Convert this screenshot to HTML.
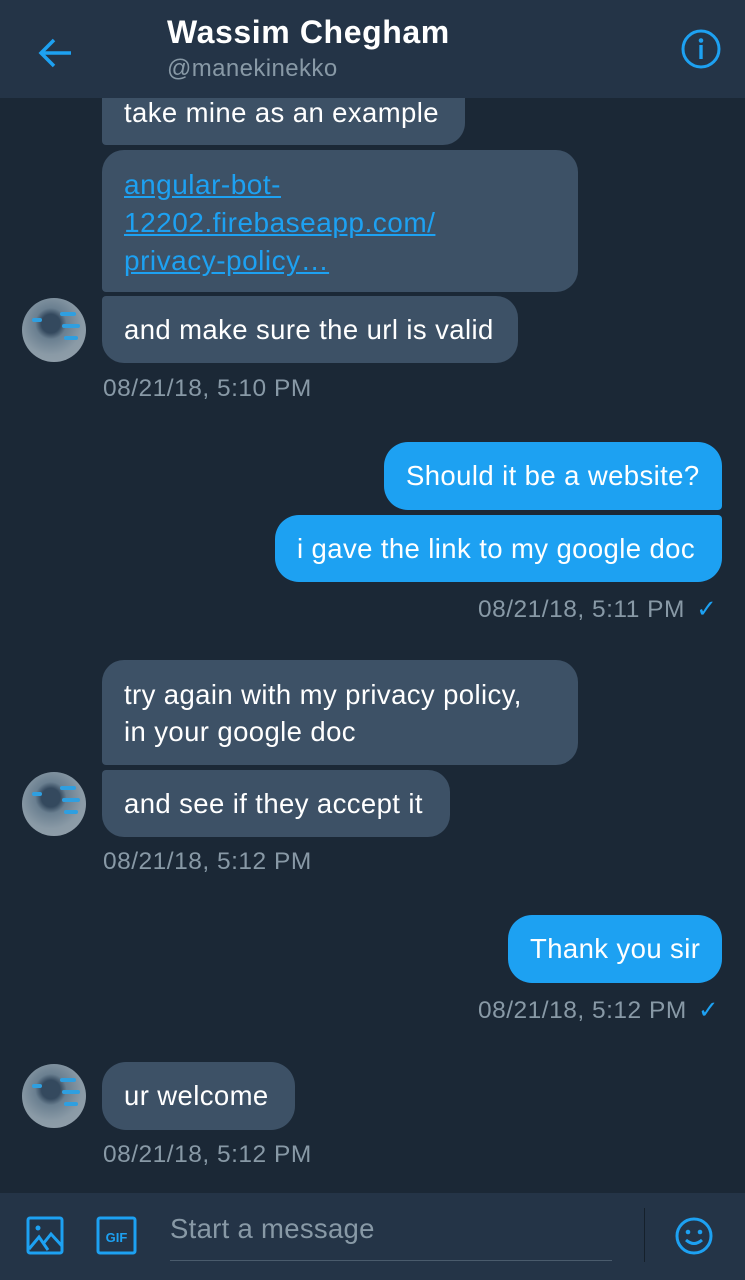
<!DOCTYPE html>
<html><head><meta charset="utf-8"><style>
body{margin:0;width:745px;height:1280px;background:#1b2836;font-family:"Liberation Sans",Roboto,sans-serif;position:relative;overflow:hidden}
.a{position:absolute}
.r{position:absolute;background:#3d5166;color:#fff;font-size:27.5px;letter-spacing:0.4px;border-radius:24px;padding:0 22px;box-sizing:border-box;white-space:nowrap}
.s{position:absolute;background:#1da1f2;color:#fff;font-size:27.5px;letter-spacing:0.4px;border-radius:24px;padding:0 22px;box-sizing:border-box;white-space:nowrap}
.t{position:absolute;color:#8899a6;font-size:24.5px;letter-spacing:0.5px;white-space:nowrap}
.av{position:absolute;width:64px;height:64px;border-radius:50%;background:radial-gradient(circle at 45% 40%,#34495e 0 18%,#6a7f90 30%,#8a9aa6 60%,#96a2ac 100%);overflow:hidden}
.av i{position:absolute;background:#2f9fe0;height:4px;border-radius:2px}
</style></head><body>

<div class="r" style="left:102px;top:80px;width:363px;height:65px;border-radius:0 0 22px 4px"><div class="a" style="left:22px;top:17px">take mine as an example</div></div>
<div class="r" style="left:102px;top:150px;width:476px;height:142px;border-radius:22px 22px 22px 4px;color:#1da1f2;line-height:38px;padding-top:16px;text-decoration:underline;font-size:28px;letter-spacing:0.5px">angular-bot-<br>12202.firebaseapp.com/<br>privacy-policy…</div>
<div class="r" style="left:102px;top:296px;width:416px;height:67px;line-height:67px;border-radius:4px 22px 22px 22px">and make sure the url is valid</div>
<div class="av" style="left:22px;top:298px"><i style="left:38px;top:14px;width:16px"></i><i style="left:40px;top:26px;width:18px"></i><i style="left:42px;top:38px;width:14px"></i><i style="left:10px;top:20px;width:10px"></i></div>
<div class="t" style="left:103px;top:375px">08/21/18, 5:10 PM</div>

<div class="s" style="left:384px;top:442px;width:338px;height:68px;line-height:68px;border-radius:24px 24px 4px 24px">Should it be a website?</div>
<div class="s" style="left:275px;top:515px;width:447px;height:67px;line-height:67px;border-radius:24px 4px 24px 24px">i gave the link to my google doc</div>
<div class="t" style="left:478px;top:594px">08/21/18, 5:11 PM <span style="color:#1da1f2;margin-left:4px">✓</span></div>

<div class="r" style="left:102px;top:660px;width:476px;height:105px;line-height:37px;padding-top:16px;border-radius:22px 22px 22px 4px">try again with my privacy policy,<br>in your google doc</div>
<div class="r" style="left:102px;top:770px;width:348px;height:67px;line-height:67px;border-radius:4px 22px 22px 22px">and see if they accept it</div>
<div class="av" style="left:22px;top:772px"><i style="left:38px;top:14px;width:16px"></i><i style="left:40px;top:26px;width:18px"></i><i style="left:42px;top:38px;width:14px"></i><i style="left:10px;top:20px;width:10px"></i></div>
<div class="t" style="left:103px;top:848px">08/21/18, 5:12 PM</div>

<div class="s" style="left:508px;top:915px;width:214px;height:68px;line-height:68px">Thank you sir</div>
<div class="t" style="left:478px;top:995px">08/21/18, 5:12 PM <span style="color:#1da1f2;margin-left:4px">✓</span></div>

<div class="r" style="left:102px;top:1062px;width:193px;height:68px;line-height:68px">ur welcome</div>
<div class="av" style="left:22px;top:1064px"><i style="left:38px;top:14px;width:16px"></i><i style="left:40px;top:26px;width:18px"></i><i style="left:42px;top:38px;width:14px"></i><i style="left:10px;top:20px;width:10px"></i></div>
<div class="t" style="left:103px;top:1141px">08/21/18, 5:12 PM</div>

<!-- header -->
<div class="a" style="left:0;top:0;width:745px;height:98px;background:#243447"></div>
<svg class="a" style="left:36px;top:34px" width="38" height="38" viewBox="0 0 38 38"><path d="M35 19H5M18 6L5 19l13 13" stroke="#1da1f2" stroke-width="3.5" fill="none"/></svg>
<div class="a" style="left:167px;top:14px;color:#fff;font-size:32px;font-weight:bold;letter-spacing:0.6px">Wassim Chegham</div>
<div class="a" style="left:167px;top:55px;color:#8899a6;font-size:24px;letter-spacing:0.4px">@manekinekko</div>
<svg class="a" style="left:680px;top:28px" width="42" height="42" viewBox="0 0 42 42"><circle cx="21" cy="21" r="18" stroke="#1da1f2" stroke-width="3" fill="none"/><circle cx="21" cy="12.5" r="2.3" fill="#1da1f2"/><rect x="19.3" y="17" width="3.4" height="14" fill="#1da1f2"/></svg>

<!-- bottom -->
<div class="a" style="left:0;top:1193px;width:745px;height:87px;background:#243447"></div>
<svg class="a" style="left:26px;top:1216px" width="40" height="40" viewBox="0 0 40 40"><rect x="2" y="2" width="34" height="35" rx="2" stroke="#1da1f2" stroke-width="3" fill="none"/><circle cx="12" cy="12" r="2.5" fill="#1da1f2"/><path d="M3 33l10-12 9 13M17 28l8-10 11 12" stroke="#1da1f2" stroke-width="3" fill="none"/></svg>
<svg class="a" style="left:96px;top:1216px" width="42" height="40" viewBox="0 0 42 40"><rect x="2" y="2" width="37" height="35" rx="2" stroke="#1da1f2" stroke-width="3" fill="none"/><text x="20.5" y="26" text-anchor="middle" font-family="Liberation Sans" font-weight="bold" font-size="13" fill="#1da1f2">GIF</text></svg>
<div class="a" style="left:170px;top:1213px;color:#8899a6;font-size:27.5px;letter-spacing:0.3px">Start a message</div>
<div class="a" style="left:170px;top:1260px;width:442px;height:1px;background:#4a5b6c"></div>
<div class="a" style="left:644px;top:1208px;width:1px;height:54px;background:#15202b"></div>
<svg class="a" style="left:674px;top:1216px" width="40" height="40" viewBox="0 0 40 40"><circle cx="20" cy="20" r="17" stroke="#1da1f2" stroke-width="3" fill="none"/><circle cx="14" cy="16" r="2.3" fill="#1da1f2"/><circle cx="26" cy="16" r="2.3" fill="#1da1f2"/><path d="M12 24q8 7 16 0" stroke="#1da1f2" stroke-width="3" fill="none"/></svg>
</body></html>
